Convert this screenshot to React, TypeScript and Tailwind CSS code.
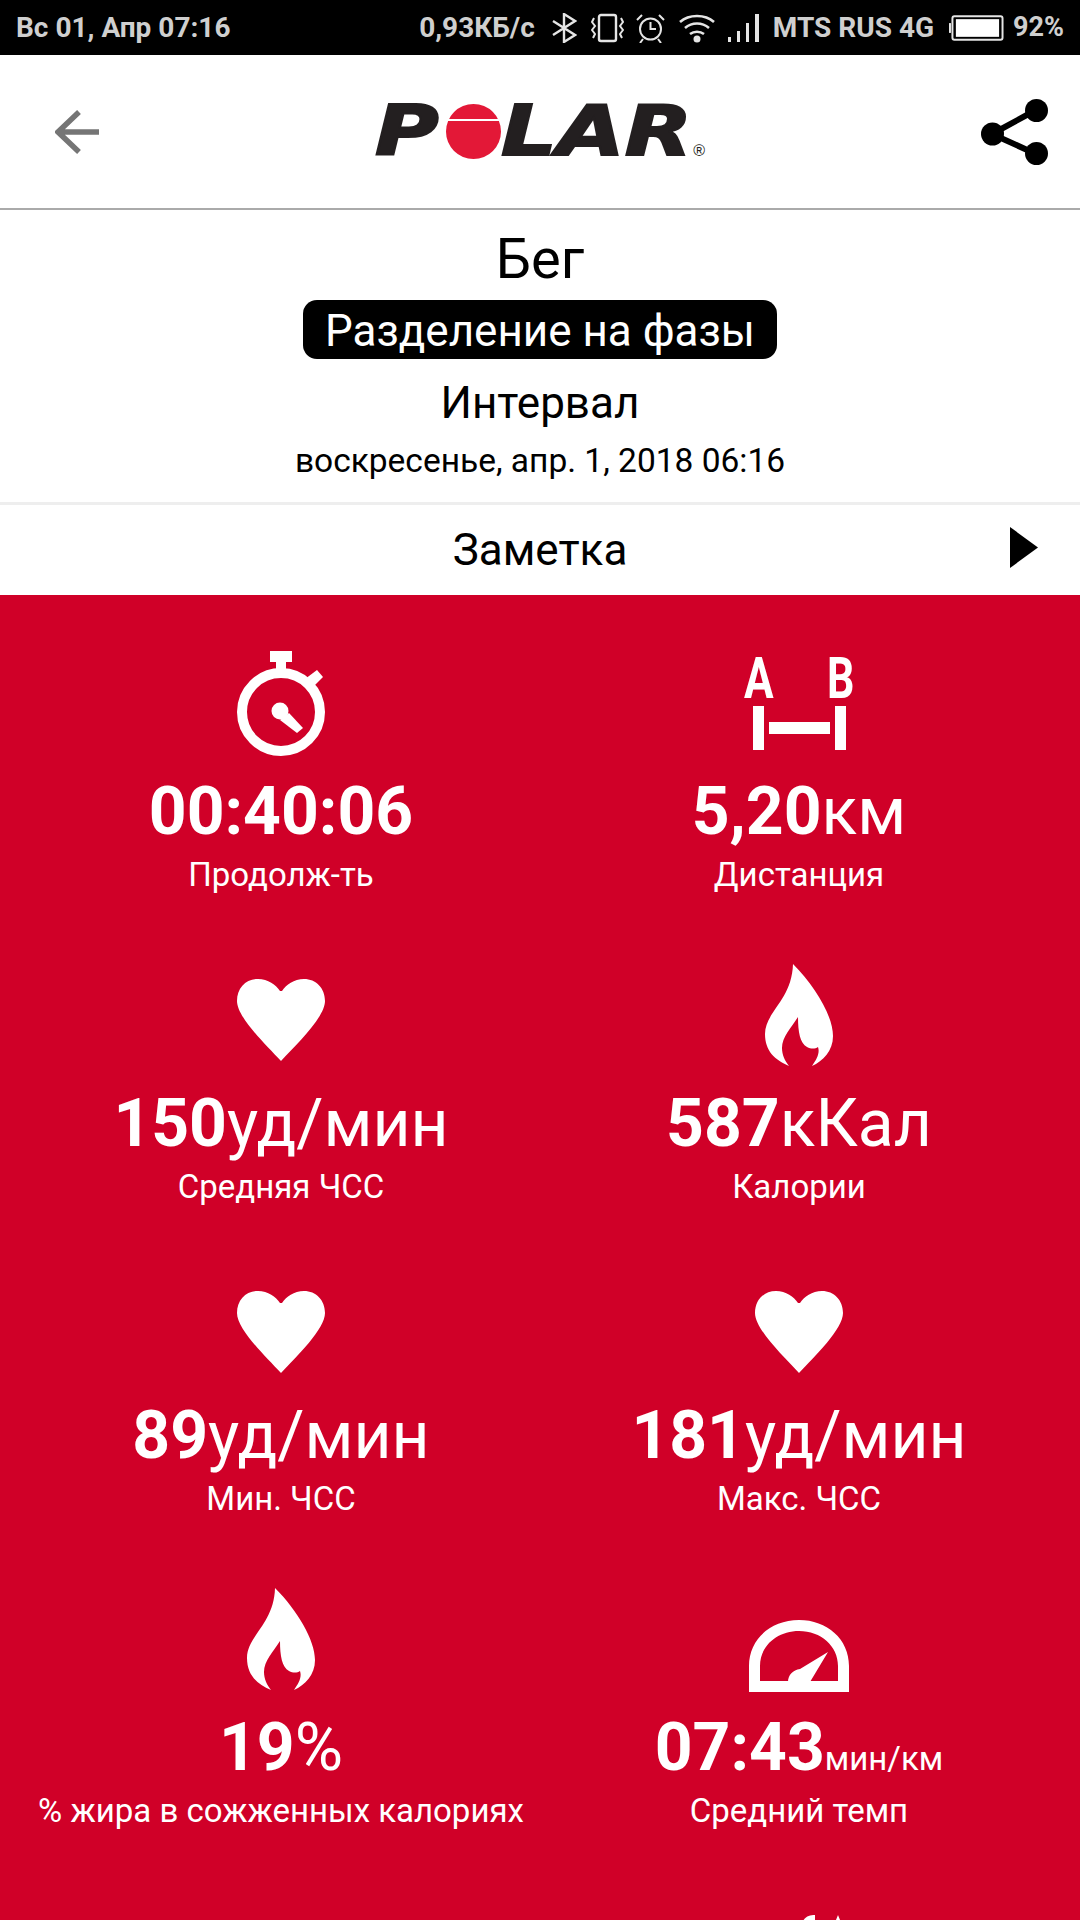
import type { ReactNode } from "react";

function Heart() {
  return (
    <svg viewBox="0 0 88 82" className="mb-[7px] h-[82px] w-[88px]" fill="white">
      <path d="M44 82C28 65 0 38 0 22C0 9 9 0 21 0C31 0 39 6 43 12L45 12C49 6 57 0 67 0C79 0 88 9 88 22C88 38 60 65 44 82Z" />
    </svg>
  );
}

function Flame() {
  return (
    <svg viewBox="0 0 68 102" className="mb-[2px] h-[102px] w-[68px]" fill="white">
      <path d="M28 0C50 22 68 52 68 72C68 87 58 97 47 102C52 95 55 89 53 83C50 85 46 85 42 83C35 79 33 68 33 53C26 64 17 73 17 84C17 91 20 97 24 102C10 96 0 87 0 70C0 48 27 36 28 0Z" />
    </svg>
  );
}

function Stopwatch() {
  return (
    <svg viewBox="0 0 88 105" className="h-[105px] w-[88px]" fill="white">
      <rect x="33" y="0" width="22" height="11" />
      <rect x="39" y="10" width="10" height="9" />
      <path d="M68 28L80 19L86 26L76 36Z" />
      <circle cx="44" cy="61" r="39" fill="none" stroke="white" strokeWidth="10" />
      <circle cx="43" cy="60" r="8.5" />
      <path d="M52 62L66 77L60 82L43 69Z" />
    </svg>
  );
}

function Distance() {
  return (
    <div className="mb-[6px] flex w-[110px] flex-col">
      <div className="flex h-[50px] justify-between text-[58px] leading-[44px] font-bold text-white">
        <span className="w-[29px] origin-left scale-x-[0.76]">A</span>
        <span className="w-[27px] origin-left scale-x-[0.74]">B</span>
      </div>
      <svg viewBox="0 0 110 44" className="h-[44px] w-[110px]" fill="white">
        <rect x="9" y="0" width="11" height="44" />
        <rect x="25" y="16" width="61" height="12" />
        <rect x="91" y="0" width="11" height="44" />
      </svg>
    </div>
  );
}

function Gauge() {
  return (
    <svg viewBox="0 0 100 72" className="h-[72px] w-[100px]" fill="white">
      <path fillRule="evenodd" d="M0 72V46C0 19 22 0 50 0C78 0 100 19 100 46V72ZM11 61H89V46C89 26 72 11 50 11C28 11 11 26 11 46Z" />
      <path d="M39 62C39 55 44 50 51 49L79 32L61 62Z" />
    </svg>
  );
}

function Stat({ icon, value, unit, label, smallUnit }: { icon: ReactNode; value: string; unit?: string; label: string; smallUnit?: boolean }) {
  return (
    <div className="flex h-[312px] flex-col items-center">
      <div className="flex h-[108px] items-end">{icon}</div>
      <div className="mt-[18px] flex items-baseline text-[66px] leading-[76px] font-bold whitespace-nowrap text-white">
        {value}
        {unit && <span className={smallUnit ? "text-[33px] leading-none font-normal" : "font-normal"}>{unit}</span>}
      </div>
      <div className="mt-[5px] text-[33px] leading-[40px] whitespace-nowrap text-white">{label}</div>
    </div>
  );
}

export default function App() {
  return (
    <div className="flex h-[1920px] w-[1080px] flex-col overflow-hidden bg-white font-['Roboto',sans-serif]">
      {/* status bar */}
      <div className="flex h-[55px] shrink-0 items-center justify-between bg-black px-[16px] text-[28px] font-bold text-[#cfcfcf]">
        <span>Вс 01, Апр 07:16</span>
        <div className="flex items-center">
          <span>0,93КБ/с</span>
          <svg viewBox="0 0 25 30" className="ml-[17px] h-[30px] w-[25px]" fill="none" stroke="#e5e5e5" strokeWidth="2.4">
            <path d="M1 8L23 22L12 29V1L23 8L1 22" />
          </svg>
          <svg viewBox="0 0 33 30" className="ml-[14px] h-[30px] w-[33px]" fill="none" stroke="#e5e5e5" strokeWidth="2.4">
            <rect x="8" y="2" width="17" height="26" rx="2" />
            <path d="M3 5L1 9L4 13L1 17L4 21L2 25M30 5L32 9L29 13L32 17L29 21L31 25" strokeWidth="2" />
          </svg>
          <svg viewBox="0 0 29 30" className="ml-[12px] h-[30px] w-[29px]" fill="none" stroke="#e5e5e5" strokeWidth="2">
            <circle cx="14.5" cy="16" r="10.5" />
            <path d="M14.5 9V16H20M1 7L6 2M28 7L23 2M7 26L4 30M22 26L25 30" />
          </svg>
          <svg viewBox="0 0 36 30" className="ml-[14px] h-[30px] w-[36px]" fill="none" stroke="#e5e5e5" strokeWidth="2.6">
            <path d="M1 9C10 1 26 1 35 9M6 15C13 9 23 9 30 15M11 21C15 18 21 18 25 21" />
            <circle cx="18" cy="26" r="3.5" fill="#e5e5e5" stroke="none" />
          </svg>
          <svg viewBox="0 0 31 30" className="ml-[13px] h-[30px] w-[31px]" fill="#e5e5e5">
            <rect x="0" y="24" width="3" height="5" />
            <rect x="9" y="18" width="3" height="11" />
            <rect x="18" y="10" width="3" height="19" />
            <rect x="27" y="1" width="4" height="28" />
          </svg>
          <span className="ml-[14px]">MTS RUS 4G</span>
          <svg viewBox="0 0 56 26" className="ml-[15px] h-[26px] w-[55px]">
            <rect x="0" y="8" width="2" height="10" fill="#e5e5e5" />
            <rect x="3.5" y="1" width="51" height="24" rx="2" fill="none" stroke="#e5e5e5" strokeWidth="2" />
            <rect x="7" y="4" width="44" height="18" fill="white" />
          </svg>
          <span className="ml-[9px] text-[27px]">92%</span>
        </div>
      </div>

      {/* toolbar */}
      <div className="flex h-[155px] shrink-0 items-center justify-between border-b-2 border-[#aaaaaa] pr-[32px] pl-[55px]">
        <svg viewBox="0 0 44 44" className="h-[44px] w-[44px]" fill="none" stroke="#757575" strokeWidth="5.5">
          <path d="M44 22H4M24 2L3 22L24 42" />
        </svg>
        <div className="relative mr-[9px] flex w-[305px] items-center font-['DejaVu_Sans',sans-serif] text-[69px] leading-none font-bold text-[#231f20] italic">
          <span className="ml-[-8px] w-[71px] origin-left scale-x-[1.26] [-webkit-text-stroke:2px_#231f20]">P</span>
          <svg viewBox="0 0 55 55" className="h-[55px] w-[55px] shrink-0">
            <circle cx="27.5" cy="27.5" r="27.5" fill="#e31837" />
            <rect x="0" y="15" width="55" height="2" fill="white" />
          </svg>
          <span className="w-[187px] origin-left scale-x-[1.27] [-webkit-text-stroke:2px_#231f20]">LAR</span>
          <span className="absolute right-[-17px] bottom-[7px] font-['Liberation_Sans',sans-serif] text-[16px] font-normal not-italic">®</span>
        </div>
        <svg viewBox="0 0 67 66" className="h-[66px] w-[67px]" fill="black">
          <circle cx="55.5" cy="11.5" r="11.5" />
          <circle cx="11.5" cy="35" r="11.5" />
          <circle cx="55.5" cy="54.5" r="11.5" />
          <path d="M11 35L55 11M11 35L55 55" stroke="black" strokeWidth="6" />
        </svg>
      </div>

      {/* session title */}
      <div className="flex h-[295px] shrink-0 flex-col items-center border-b-[3px] border-[#eeeeee] text-black">
        <div className="mt-[17px] text-[56px] leading-[64px]">Бег</div>
        <div className="mt-[9px] h-[59px] rounded-[14px] bg-black px-[22px] text-[44px] leading-[63px] text-white">Разделение на фазы</div>
        <div className="mt-[19px] text-[44px] leading-[50px]">Интервал</div>
        <div className="mt-[14px] text-[33.5px] leading-[38px]">воскресенье, апр. 1, 2018 06:16</div>
      </div>

      <div className="relative flex h-[90px] shrink-0 items-center justify-center text-[44px] text-black">
        Заметка
        <svg viewBox="0 0 28 41" className="absolute top-[22px] right-[42px] h-[41px] w-[28px]" fill="black">
          <path d="M0 0L28 20.5L0 41Z" />
        </svg>
      </div>

      {/* stats */}
      <div className="grid flex-1 grid-cols-[562px_474px] content-start bg-[#d00028] pt-[53px]">
        <Stat icon={<Stopwatch />} value="00:40:06" label="Продолж-ть" />
        <Stat icon={<Distance />} value="5,20" unit="км" label="Дистанция" />
        <Stat icon={<Heart />} value="150" unit="уд/мин" label="Средняя ЧСС" />
        <Stat icon={<Flame />} value="587" unit="кКал" label="Калории" />
        <Stat icon={<Heart />} value="89" unit="уд/мин" label="Мин. ЧСС" />
        <Stat icon={<Heart />} value="181" unit="уд/мин" label="Макс. ЧСС" />
        <Stat icon={<Flame />} value="19" unit="%" label="% жира в сожженных калориях" />
        <Stat icon={<Gauge />} value="07:43" unit="мин/км" smallUnit label="Средний темп" />
        <div />
        <div className="flex pt-[19px] pl-[233px]">
          <svg viewBox="0 0 60 20" className="h-[20px] w-[60px]" fill="white">
            <path d="M8 6C11 1 15 0 20 0V20H4Z" />
            <path d="M43 0L51 20H35Z" />
          </svg>
        </div>
      </div>
    </div>
  );
}
